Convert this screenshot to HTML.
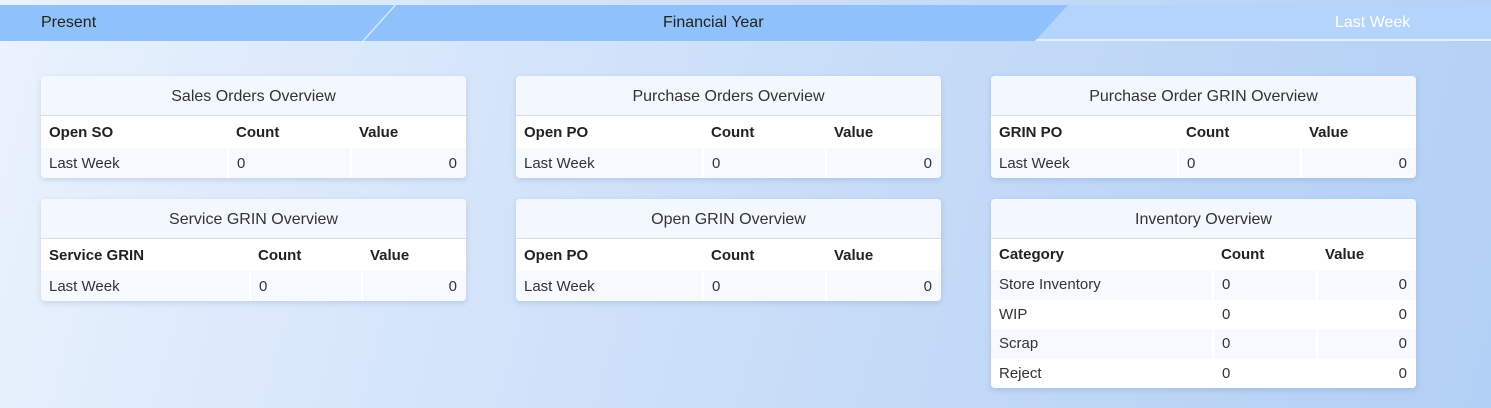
<!DOCTYPE html>
<html><head><style>
*{margin:0;padding:0;box-sizing:border-box}
body{width:1491px;height:408px;overflow:hidden;font-family:"Liberation Sans",sans-serif;background:linear-gradient(105deg,#eaf2fd 0%,#d3e4fa 35%,#c3d9f7 65%,#b2cff5 100%);position:relative;color:#222}
.bar{position:absolute;top:5px;left:0;width:1491px;height:36px;background:#b4d4fb;border-bottom:2px solid #e6f0fd}
.t1{position:absolute;left:0;top:0;height:36px;width:1068px;background:#8fc1fa;clip-path:polygon(0 0,1068px 0,1035px 36px,0 36px)}
.sep{position:absolute;left:362px;top:0;width:2px;height:36px;background:#d4e6fd;transform:skewX(-42deg);transform-origin:bottom}
.lbl{position:absolute;top:9px;font-size:16px}
.card{position:absolute;width:425px;background:#f6faff;border-radius:4px;box-shadow:0 2px 6px rgba(60,90,140,.18);overflow:hidden}
.card h3{height:40px;line-height:41px;text-align:center;font-weight:normal;font-size:16px;color:#333;border-bottom:1px solid #d8dde4;background:#f3f8ff}
table{border-collapse:collapse;width:100%;font-size:15px}
th{height:32px;text-align:left;padding-left:8px;background:#fff;font-weight:bold;color:#222}
td{height:30px;padding-left:8px;color:#333;border-right:2px solid #fff}
td:last-child{text-align:right;padding-right:9px;border-right:0}
tr.w td{background:#fff}
.inv th{height:31px}
.inv td{height:29.5px}
</style></head><body>
<div class="bar"><div class="t1"></div><div class="sep"></div>
<div class="lbl" style="left:41px">Present</div>
<div class="lbl" style="left:663px">Financial Year</div>
<div class="lbl" style="left:1335px;color:#fff">Last Week</div></div>

<div class="card" style="left:41px;top:76px"><h3>Sales Orders Overview</h3>
<table><tr><th style="width:187px">Open SO</th><th style="width:123px">Count</th><th>Value</th></tr>
<tr><td>Last Week</td><td>0</td><td>0</td></tr></table></div>

<div class="card" style="left:516px;top:76px"><h3>Purchase Orders Overview</h3>
<table><tr><th style="width:187px">Open PO</th><th style="width:123px">Count</th><th>Value</th></tr>
<tr><td>Last Week</td><td>0</td><td>0</td></tr></table></div>

<div class="card" style="left:991px;top:76px"><h3>Purchase Order GRIN Overview</h3>
<table><tr><th style="width:187px">GRIN PO</th><th style="width:123px">Count</th><th>Value</th></tr>
<tr><td>Last Week</td><td>0</td><td>0</td></tr></table></div>

<div class="card" style="left:41px;top:199px"><h3>Service GRIN Overview</h3>
<table><tr><th style="width:209px">Service GRIN</th><th style="width:112px">Count</th><th>Value</th></tr>
<tr><td>Last Week</td><td>0</td><td>0</td></tr></table></div>

<div class="card" style="left:516px;top:199px"><h3>Open GRIN Overview</h3>
<table><tr><th style="width:187px">Open PO</th><th style="width:123px">Count</th><th>Value</th></tr>
<tr><td>Last Week</td><td>0</td><td>0</td></tr></table></div>

<div class="card" style="left:991px;top:199px"><h3>Inventory Overview</h3>
<table class="inv"><tr><th style="width:222px">Category</th><th style="width:104px">Count</th><th>Value</th></tr>
<tr><td>Store Inventory</td><td>0</td><td>0</td></tr>
<tr class="w"><td>WIP</td><td>0</td><td>0</td></tr>
<tr><td>Scrap</td><td>0</td><td>0</td></tr>
<tr class="w"><td>Reject</td><td>0</td><td>0</td></tr></table></div>
</body></html>
